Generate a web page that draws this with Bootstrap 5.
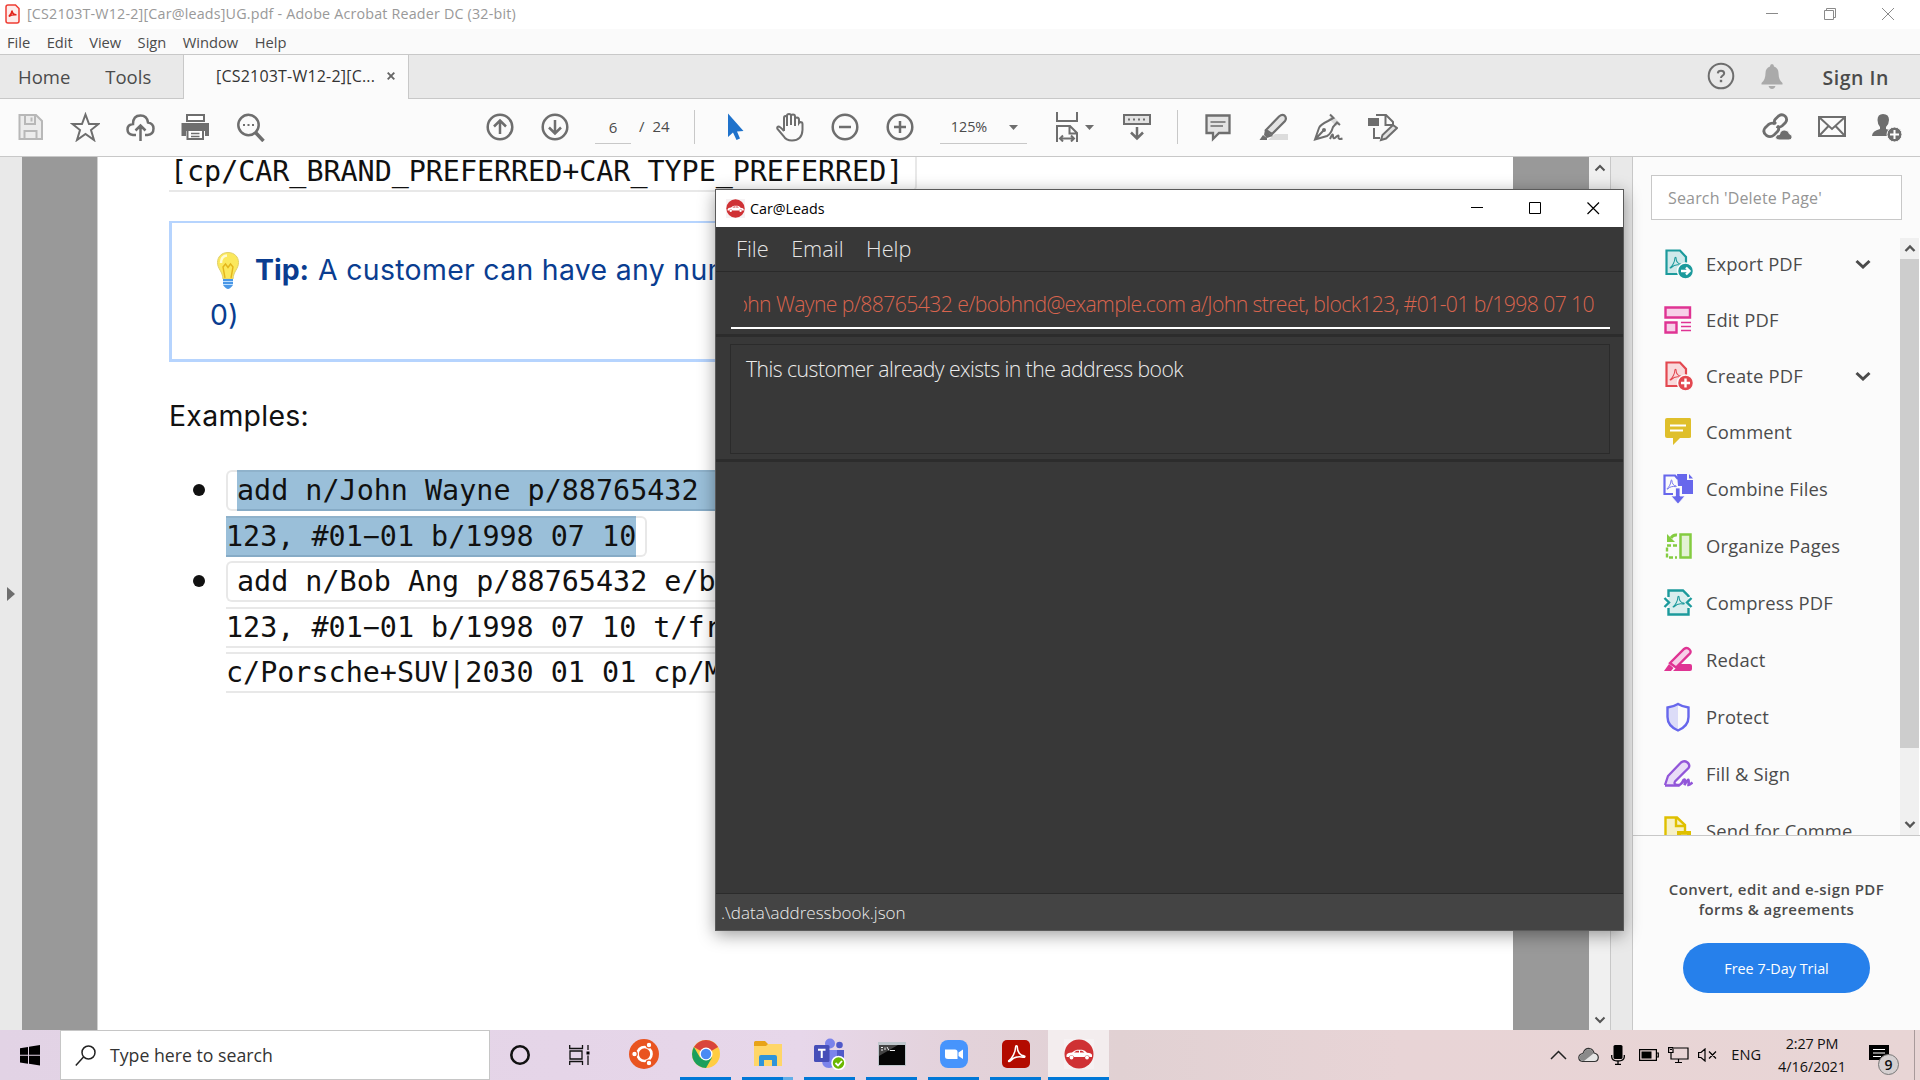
<!DOCTYPE html>
<html lang="en">
<head>
<meta charset="utf-8">
<title>Desktop</title>
<link href="https://cdn.jsdelivr.net/npm/bootstrap@5.3.0/dist/css/bootstrap.min.css" rel="stylesheet">
<style>
body{width:1920px;height:1080px;overflow:hidden;background:#fbfbfb;font-family:"Open Sans","Noto Sans",sans-serif;color:#4b4b4b;white-space:nowrap}
svg{display:block;flex:none}
.ln{fill:none;stroke:#6e6e6e;stroke-width:2}
.w25{stroke-width:2.5}
.gry{fill:#6e6e6e}
.titlebar{height:29px;background:#fff;color:#999;padding-left:5px;padding-right:26px}
.titlebar .cap{font-size:14.3px;line-height:28px;margin-left:7px;letter-spacing:.185px}
.winbtns{gap:46px}
.menubar{height:26px;background:#fafafa;border-bottom:1px solid #c8c8c8;padding-left:7px;font-size:14.7px;line-height:26px;gap:16.4px}
.tabs{height:44px;background:#e9e9e9;border-bottom:1px solid #c8c8c8;line-height:43px}
.navtabs{font-size:18.5px;padding-left:18px;gap:35px;width:183px}
.doctab{width:226px;height:44px;background:#fbfbfb;border:1px solid #c8c8c8;border-width:0 1px;padding-left:32px;color:#333;font-size:16px;letter-spacing:.2px}
.doctab svg{margin:17px 0 0 12px}
.account{padding-right:31px}
.account .q{margin:7px 26px 0 0}
.account .bell{margin:9px 39px 0 0}
.signin{font-size:19.5px;font-weight:600;line-height:46px;letter-spacing:.55px}
.tools{height:58px;border-bottom:1px solid #c8c8c8;font-size:15px;padding-bottom:2px}
.tools svg{width:30px;height:30px}
.tools .grp{gap:25px}
.pg{width:36px;height:34px;border-bottom:1px solid #c8c8c8;line-height:34px;margin-left:25px}
.zm{width:87px;height:34px;border-bottom:1px solid #c8c8c8;line-height:34px;padding-left:11px;padding-right:9px;margin-left:25px;font-size:14.4px}
.tools svg.caret{width:9px}
.vsep{width:1px;height:34px;background:#c8c8c8}
.main{height:873px}
.rail{width:22px;background:#e9e9e9;padding-left:7px}
.gut{background:#999}
.gut.l{width:75px}
.gut.r{width:76px}
.sheet{width:1416px;background:#fff;border-left:1px solid #d0d0d0;padding-left:71px;overflow:hidden}
.mono{font-family:"DejaVu Sans Mono","Liberation Mono",monospace;font-size:28.4px;line-height:37px;color:#111;height:41px;white-space:pre}
.cbox{border:2px solid #e8e8e8}
.first{width:748px;margin-top:-6px;border-left:0;border-radius:0 6px 6px 0;padding-left:1px;letter-spacing:-.04px}
.tip{font-family:Inter,Roboto,sans-serif;margin-top:29px;height:141px;width:1273px;border:3px solid #b6d4fe;border-top-width:2px;padding:24px 0 0 38px;font-size:28.4px;line-height:45px;color:#0a3d90}
.tip svg{display:inline-block;vertical-align:-9px;margin:0 16px 0 7px}
.tip span{letter-spacing:.33px}
.tip b+span{margin-left:1px}
.ex{font-family:Inter,Roboto,sans-serif;font-size:28.4px;line-height:45px;color:#111;margin-top:31px;margin-bottom:32px;letter-spacing:.3px}
.codes{margin-left:57px;gap:4.5px}
.codes .mono{width:1100px}
.codes .st{border-radius:6px 0 0 6px;border-right:0;padding-left:9px}
.codes .mid{border-left:0;border-right:0}
.codes .en{width:421px;border-left:0;border-radius:0 6px 6px 0}
.sel{display:inline-block;background:#9abfd9;height:41px;margin-top:-2px;border-bottom:2px solid #86abc6;border-top:2px solid #8fb2cb}
.dot{width:12px;height:12px;border-radius:50%;background:#111;left:-35px;top:12px}
.sb{width:22px;background:#f0f0f0;border-right:1px solid #c8c8c8;padding:7px 0 6px 5px}
.strip{width:22px;background:#e9e9e9;border-right:1px solid #c8c8c8}
.side{width:287px;background:#fbfbfb}
.find{width:251px;height:45px;border:1px solid #c8c8c8;background:#fff;margin:18px 0 0 18px;padding-left:16px;font-size:16px;line-height:45px;color:#959595;letter-spacing:.17px}
.lst{height:598px;margin-top:18px;border-bottom:1px solid #c8c8c8;overflow:hidden}
.items{margin-top:-2px}
.it{height:57px;padding-left:30px;width:267px;font-size:18.4px;line-height:54px;letter-spacing:.16px}
.it:nth-child(-n+4){height:56px}
.it span{margin-left:13px;color:#4b4b4b}
.it svg{width:30px;height:30px}
.it .chv{width:16px;height:10px;margin-left:auto;margin-right:29px}
.teal{color:#1c9a9c}.coral{color:#e34850}.indigo{color:#6767ec}
.lsb{width:20px;background:#f0f0f0;border-right:1px solid #fff}
.thumb{height:489px;background:#cdcdcd}
.promo{font-size:15px;font-weight:600;line-height:20.4px;margin-top:43px;letter-spacing:.42px}
.trial,.trial:hover{width:187px;height:50px;background:#2680eb;color:#fff;font-size:14.4px;border-radius:25px;line-height:49px;margin-top:23px;padding:0}
.carwin{left:715px;top:189px;width:909px;height:742px;border:1px solid #5a5a5a;background:#383838;box-shadow:0 4px 16px rgba(0,0,0,.38)}
.cbar{height:37px;background:#fff;color:#000;padding-left:10px;padding-right:23px;font-size:14.3px;line-height:38px}
.cbar>svg{margin:9px 5px 0 0}
.cbar .winbtns{margin-top:12px}
.cmenu{height:45px;border-bottom:1px solid #2a2a2a;padding-left:20px;font-size:21.7px;font-weight:300;line-height:44px;color:#e6e6e6;gap:22.5px}
.cmdarea{height:65px;border-bottom:3px solid #2c2c2c;padding:0 13px 0 15px}
.cmdline{height:57px;border-bottom:2px solid #fff;padding:0 16px 0 13px}
.cmdline div{height:55px;line-height:64px;overflow:hidden;font-size:21.2px;font-weight:300;color:#d8644e;letter-spacing:-.61px}
.resarea{height:125px;border-bottom:3px solid #2c2c2c;padding:7px 13px 0 14px}
.resbox{height:110px;border:1px solid #2b2b2b;padding-left:15px;font-size:21.2px;font-weight:300;line-height:48px;color:#ececec;letter-spacing:-.54px}
.cstat{height:37px;border-top:1px solid #2b2b2b;background:#444;padding-left:5px;font-size:17px;font-weight:300;line-height:38px;color:#ececec}
.task{height:50px;background:linear-gradient(90deg,#e2d3e5 0,#e5d5e8 560px,#e7d7ea 800px,#e3d2da 960px,#e1d1d3 1120px,#e8d4d6 1400px,#e8d5d5 1920px);color:#111}
.start{margin:15px 0 0 19px}
.tsearch{width:430px;height:50px;background:#fff;border:1px solid #c6c6c6;margin-left:20px;padding-left:14px;font-size:17.7px;color:#333;line-height:48px}
.tsearch svg{margin:14px 13px 0 0}
.cortana{margin:14px 0 0 19px}
.tview{margin:15px 0 0 38px}
.apps{margin-left:28px}
.app{width:51px;height:50px;margin-right:11px;border-bottom:3px solid #0078d7}
.app.off{border-color:transparent}
.app.part{border-image:linear-gradient(90deg,#0078d7 80%,#62aee8 80%) 1}
.app.act{width:61px;background:#f3edee;margin-left:-4px}
.lang{font-size:14.6px;margin-left:14px}
.clk{width:80px;font-size:14.4px;line-height:23.4px;margin-left:11px}
.clk .hm{letter-spacing:-.2px}
.act-c{margin-left:17px;height:50px;width:45px}
.act-c svg{margin-top:15px}
.nine{left:9px;top:24px;width:21px;height:21px;border-radius:50%;background:#d4cfd0;border:1px solid #777;font-size:14px;font-weight:600;line-height:19px;color:#111}
.peek{width:6px;height:50px;border-left:1px solid #a89a9b}
</style>
<script src="https://cdn.jsdelivr.net/npm/bootstrap@5.3.0/dist/js/bootstrap.bundle.min.js"></script>
</head>
<body>
<svg width="0" height="0" class="position-absolute">
<defs>
<symbol id="tre" viewBox="0 0 20 20"><path d="M2 17.500C5.500 15.500 9 8 9 3.500C9 1.200 11 1.200 10.900 3.500C10.800 8 14 12.500 18 12.500C19.500 12.800 18.800 14.300 17 13.900C12.500 12.800 7 14 3.500 17.800C2.500 18.800 1 18.500 2 17.500Z" fill="none" stroke="currentColor" stroke-width="1.600"/></symbol>
<symbol id="carico" viewBox="0 0 30 30"><rect width="30" height="30" fill="#f6f2f3"/><circle cx="15" cy="15" r="14.500" fill="#cf3134"/><path d="M2.500 16Q3 14 8 13.600Q10.500 11 13 10.700H18Q21 11 23 13.700Q28 14 28 16V18H25.600A2.700 2.700 0 0 0 20.600 18H10A2.700 2.700 0 0 0 5 18H2.500Z" fill="#fff"/><circle cx="7.500" cy="18.500" r="1.900" fill="#fff"/><circle cx="23" cy="18.500" r="1.900" fill="#fff"/><path d="M10 13.600 12.500 11.800H15V13.600ZM16 11.800H18L20.500 13.600H16Z" fill="#cf3134"/></symbol>
</defs>
</svg>

<header>
<div class="titlebar d-flex">
  <svg class="mt-1 coral" width="15" height="20" viewBox="0 0 15 20"><path d="M1 3Q1 1 3 1H10.500L14 4.500V17Q14 19 12 19H3Q1 19 1 17Z" fill="#fdeceb" stroke="#ee3c33" stroke-width="1.500"/><path d="M3.800 12.500Q7 9.500 7 6.500M7 7Q8 11 11.500 10.800M4 12.300Q6.500 10.600 11 10.800" fill="none" stroke="#e2231a" stroke-width="1.500"/></svg>
  <span class="cap">[CS2103T-W12-2][Car@leads]UG.pdf - Adobe Acrobat Reader DC (32-bit)</span>
  <div class="winbtns d-flex ms-auto mt-2">
    <svg width="12" height="12"><path d="M0 5.500H12" stroke="#8a8a8a"/></svg>
    <svg width="12" height="12"><path d="M.5 2.500H9.500V11.500H.5ZM2.500 2.500V.5H11.500V9.500H9.500" fill="none" stroke="#8a8a8a"/></svg>
    <svg width="12" height="12"><path d="M0 0 12 12M12 0 0 12" stroke="#8a8a8a"/></svg>
  </div>
</div>
<nav class="menubar d-flex"><span>File</span><span>Edit</span><span>View</span><span>Sign</span><span>Window</span><span>Help</span></nav>
<div class="tabs d-flex">
  <div class="navtabs d-flex"><span>Home</span><span>Tools</span></div>
  <div class="doctab d-flex"><span>[CS2103T-W12-2][C...</span><svg width="8" height="8"><path d="M.7.7 7.300 7.300M7.300.7.7 7.300" stroke="#666" stroke-width="1.900"/></svg></div>
  <div class="account d-flex ms-auto">
    <svg class="q" width="28" height="28" viewBox="0 0 28 28"><circle cx="14" cy="14" r="12.300" class="ln"/><path d="M10.800 11.300Q11 8.800 14 8.800T17.200 11.300Q17.200 12.800 15.600 13.600Q14 14.500 14 16" class="ln"/><rect x="12.800" y="17.800" width="2.400" height="2.400" class="gry"/></svg>
    <svg class="bell" width="22" height="26" viewBox="0 0 22 26"><path d="M9 2.500Q9 0 11 0T13 2.500Q17.500 4 17.500 9Q17.500 16 21.500 19V20.500H.5V19Q4.500 16 4.500 9Q4.500 4 9 2.500ZM7.500 22H14.500Q13.500 25 11 25T7.500 22Z" fill="#aaa"/></svg>
    <span class="signin">Sign In</span>
  </div>
</div>
<div class="tools d-flex align-items-center">
  <div class="grp d-flex" style="margin-left:15px">
    <svg><path d="M4.500 3H21L27 9V27H4.500Z" fill="#ececec" stroke="#b8b8b8" stroke-width="2"/><path d="M10 3V12H20V3M9.500 27V19H21.500V27M16.500 5.500V9.500" fill="none" stroke="#b8b8b8" stroke-width="2"/></svg>
    <svg><path d="M15.500 2.500 19 12H28.500L21 18 24 28 15.500 22 7 28 10 18 2.500 12H12Z" class="ln"/></svg>
    <svg><path d="M11 23H8Q2.500 22.500 2.500 17.500Q2.500 12.500 8 12Q8 3.500 15.500 3.500Q22 3.500 23 10.500Q28.500 11.500 28.500 16.500Q28.500 22.500 22.500 23H20M15.500 29V14M10.500 18.500 15.500 13.500 20.500 18.500" class="ln w25"/></svg>
    <svg><path d="M7 3H24V9H7Z" fill="#fff" stroke="#6e6e6e" stroke-width="2"/><path d="M1.500 11H29V24H25V19H6V24H1.500Z" class="gry"/><path d="M7.500 18H23V27H7.500Z" fill="#fff" stroke="#6e6e6e" stroke-width="2"/><path d="M11 21.500H19.500M11 24.500H19.500" fill="none" stroke="#6e6e6e" stroke-width="1.300"/></svg>
    <svg><circle cx="13.500" cy="13" r="10.200" class="ln w25"/><path d="M20.500 20.500 28.500 29" fill="none" stroke="#6e6e6e" stroke-width="3.500"/><path d="M8 12h2v2H8zm4.500 0h2v2h-2zm4.500 0h2v2h-2z" class="gry"/></svg>
  </div>
  <div class="grp d-flex" style="margin-left:220px">
    <svg><circle cx="15" cy="15" r="12.300" class="ln w25"/><path d="M15 22V9M9 14.500 15 8.500 21 14.500" class="ln w25"/></svg>
    <svg><circle cx="15" cy="15" r="12.300" class="ln w25"/><path d="M15 8V21M9 15.500 15 21.500 21 15.500" class="ln w25"/></svg>
  </div>
  <div class="pg text-center">6</div>
  <span class="ms-2">/</span><span class="ms-2">24</span>
  <div class="vsep" style="margin-left:24px"></div>
  <div class="grp d-flex" style="margin-left:25px">
    <svg><path d="M8 1.500V25L13 20.500 16.500 28 20 26.500 17 19.500 23.500 19Z" fill="#1f72cb"/></svg>
    <svg><path d="M9 19V6Q9 4 10.500 4T12 6V14M12 13V3.500Q12 2 14 2T16 3.500V13M16 13V4Q16 2.500 18 2.500T20 4.500V14M20 14V7Q20 5.500 22 5.500T24 8V11Q25 9.500 27 10.500Q27.500 11 27.500 12V18Q27 28.500 17 28.500Q11 28.500 8.500 24L2.500 17Q1.500 15 3.500 14.500Q5 14.500 9 19" class="ln"/></svg>
    <svg><circle cx="15" cy="15" r="12.300" class="ln w25"/><path d="M9 15H21" class="ln w25"/></svg>
    <svg><circle cx="15" cy="15" r="12.300" class="ln w25"/><path d="M9 15H21M15 9V21" class="ln w25"/></svg>
  </div>
  <div class="zm d-flex justify-content-between"><span>125%</span><svg class="caret" style="height:34px"><path d="M0 15H9L4.500 20Z" class="gry"/></svg></div>
  <svg style="margin-left:25px"><path d="M5 0V9H25V0M5 30V14H18L25 21V30M17.500 14.500V21.500H24M8 26.500H22M11 23.500 8 26.500 11 29.500M19 23.500 22 26.500 19 29.500" class="ln"/></svg>
  <svg class="caret" style="margin-left:3px"><path d="M0 13H9L4.500 18Z" class="gry"/></svg>
  <svg style="margin-left:28px"><path d="M2 3H28V12H2Z" fill="#e3e3e3" stroke="#6e6e6e" stroke-width="2"/><path d="M6 6.500h2v2H6zm5 0h2v2h-2zm5 0h2v2h-2zm5 0h2v2h-2z" class="gry"/><path d="M15 15V26M9 20.500 15 26.500 21 20.500" class="ln w25"/></svg>
  <div class="vsep" style="margin-left:25px"></div>
  <div class="grp d-flex" style="margin-left:25px">
    <svg><path d="M3.500 3.500H26.500V21H16L10 27V21H3.500Z" fill="#e3e3e3" stroke="#6e6e6e" stroke-width="2.300"/><path d="M7.500 10H22.500M7.500 14H20" stroke="#6e6e6e" stroke-width="1.400"/></svg>
    <svg><path d="M10 28 17 22H30V28Z" fill="#dcdcdc"/><path d="M8 18 21 4.500Q24 2 26.500 3.500Q29 6 27 9L14 22Z" fill="#e3e3e3" stroke="#6e6e6e" stroke-width="2.200"/><path d="M7 17.500 15 24 9 26 6 23ZM1.500 28 5 23 9 26V28Z" class="gry"/></svg>
    <svg><path d="M19 3 27 11 23 14 16 7Z" fill="#dcdcdc"/><path d="M17 2.500 20.500 6 15 9Q7 13 6 16L2 27.500 14 24Q18 22 20 15L24 10.500 27 13M2.500 27 10.500 18.500" class="ln"/><circle cx="11" cy="18" r="2" class="gry"/><path d="M17 27Q20 20 20 24T23 25T25.500 25T29.500 26.500" class="ln"/></svg>
    <svg><path d="M8 3H18L25 10V13H17.500V4M6 16V26H12" class="ln"/><rect y="6" width="11" height="8" class="gry"/><path d="M13 28 14.500 23 25 13 29 16 18 26.500Z" fill="#e3e3e3" stroke="#6e6e6e" stroke-width="2"/></svg>
  </div>
  <div class="grp d-flex ms-auto" style="margin-right:18px">
    <svg><g fill="none" stroke="#6e6e6e" stroke-width="2.800"><path d="M14 12Q11 9.500 13.500 7L16.500 4Q20 1.500 23 4Q26 7 23.500 10.500L20 14Q17.500 16 14.500 14.500"/><path d="M15.500 14Q18 17 15.500 19.500L12 23Q8.500 26 4.500 23.500Q0 20 3 16L6.500 12.500Q10 10 13 12"/></g><path d="M17 28Q12.500 27.500 14 24Q15 22.500 17.500 22.500Q18.500 17.500 23 18Q27 18.500 27.500 22Q31 23 30 26Q29 28 27 28Z" fill="#6e6e6e" stroke="#fbfbfb"/></svg>
    <svg><path d="M2 5H28V24H2ZM2.500 5.500 15 17 27.500 5.500M2.500 23.500 11.500 14M27.500 23.500 18.500 14" class="ln"/></svg>
    <svg><path d="M11 2Q17 2 17 8Q17 12 14 15V17Q21 19 22 22V24H0Q0 19 8 17V15Q5.500 12 5.500 8Q5.500 2 11 2Z" class="gry"/><circle cx="22.500" cy="22.500" r="7.500" fill="#6e6e6e" stroke="#fbfbfb"/><path d="M18 22.500H27M22.500 18V27" stroke="#fff" stroke-width="2"/></svg>
  </div>
</div>
</header>

<main class="main d-flex">
  <div class="rail d-flex align-items-center"><svg width="8" height="14"><path d="M0 0 8 7 0 14Z" fill="#6e6e6e"/></svg></div>
  <div class="gut l"></div>
  <div class="sheet">
    <div class="mono cbox first">[cp/CAR_BRAND_PREFERRED+CAR_TYPE_PREFERRED]</div>
    <div class="tip"><svg width="22" height="37" viewBox="0 0 22 37"><path d="M11 .5C17.500.5 21.500 5 21.500 10.500C21.500 17 16.500 19 16 27H6C5.500 19 .5 17 .5 10.500C.5 5 4.500.5 11 .5Z" fill="#fbe85c" stroke="#e0cf6a"/><path d="M4 11Q4 4 10 3.500" stroke="#fffbd0" stroke-width="2.500" fill="none"/><path d="M8 26 6 15 8.500 12 11 15.500 13.500 12 16 15 14 26" fill="none" stroke="#e3b51c" stroke-width="1.400"/><path d="M6 27H16V33Q13 37 11 37T6 33Z" fill="#4a97e6"/><path d="M6 29.500H16M6 32.500H16" stroke="#bfe0ff" stroke-width="1.200"/></svg><b>Tip:</b> <span>A customer can have any num</span><br><span>0)</span></div>
    <div class="ex">Examples:</div>
    <div class="codes d-flex flex-column">
      <div class="mono cbox st position-relative"><i class="dot position-absolute"></i><span class="sel">add n/John Wayne p/88765432 e</span></div>
      <div class="mono cbox en"><span class="sel">123, #01−01 b/1998 07 10</span></div>
      <div class="mono cbox st position-relative"><i class="dot position-absolute"></i>add n/Bob Ang p/88765432 e/bo</div>
      <div class="mono cbox mid">123, #01−01 b/1998 07 10 t/fri</div>
      <div class="mono cbox mid">c/Porsche+SUV|2030 01 01 cp/Me</div>
    </div>
  </div>
  <div class="gut r"></div>
  <div class="sb d-flex flex-column justify-content-between"><svg width="12" height="8"><path d="M1.500 6.500 6 2 10.500 6.500" fill="none" stroke="#555" stroke-width="2"/></svg><svg width="12" height="8"><path d="M1.500 1.500 6 6 10.500 1.500" fill="none" stroke="#555" stroke-width="2"/></svg></div>
  <div class="strip"></div>
  <aside class="side">
    <div class="find">Search 'Delete Page'</div>
    <div class="lst d-flex">
      <div class="items">
        <div class="it d-flex align-items-center teal"><svg><path d="M3.500 1.500H17L23 8V25H3.500Z" fill="#cfe9ea" stroke="currentColor" stroke-width="2.200"/><use href="#tre" x="6" y="7" width="13" height="13"/><circle cx="22.500" cy="22" r="8" fill="currentColor" stroke="#fbfbfb" stroke-width="1.500"/><path d="M18 22H26M23 18.500 26.500 22 23 25.500" fill="none" stroke="#fff" stroke-width="2.400"/></svg><span>Export PDF</span><svg class="chv"><path d="M1.500 2 8 8 14.500 2" fill="none" stroke="#4b4b4b" stroke-width="3"/></svg></div>
        <div class="it d-flex align-items-center"><svg><path d="M2.500 2.500H27V12.500H2.500ZM2.500 17.500H13.500V27.500H2.500Z" fill="#f7d0e8" stroke="#df3393" stroke-width="2.400"/><path d="M18 17.500H28M18 21.500H28M18 25.500H28" stroke="#df3393" stroke-width="1.500"/></svg><span>Edit PDF</span></div>
        <div class="it d-flex align-items-center coral"><svg><path d="M3.500 1.500H17L23 8V25H3.500Z" fill="#f9dadc" stroke="currentColor" stroke-width="2.200"/><use href="#tre" x="6" y="7" width="13" height="13"/><circle cx="22.500" cy="22" r="8" fill="currentColor" stroke="#fbfbfb" stroke-width="1.500"/><path d="M18 22H27M22.500 17.500V26.500" stroke="#fff" stroke-width="2.400"/></svg><span>Create PDF</span><svg class="chv"><path d="M1.500 2 8 8 14.500 2" fill="none" stroke="#4b4b4b" stroke-width="3"/></svg></div>
        <div class="it d-flex align-items-center"><svg><path d="M4 1H27Q28 1 28 3V20Q28 21 26 21H17L10 28V21H4Q2 21 2 19V3Q2 1 4 1Z" fill="#dfbf2b"/><path d="M7 8.500H23M7 13.500H20" stroke="#fff" stroke-width="2"/></svg><span>Comment</span></div>
        <div class="it d-flex align-items-center indigo"><svg><path d="M10 20H1.500V1.500H12L15 5" fill="none" stroke="currentColor" stroke-width="2.200"/><path d="M14 0H24V6H30V20H19V12H15Z" fill="currentColor"/><path d="M26 0 30 4.500H26Z" fill="currentColor"/><use href="#tre" x="3" y="5" width="11" height="11"/><path d="M12.500 14H17V22H22L15 30 8 22H12.500Z" fill="currentColor" stroke="#fbfbfb" stroke-width=".8"/></svg><span>Combine Files</span></div>
        <div class="it d-flex align-items-center"><svg><path d="M17.500 3.500H27.500V26.500H17.500Z" fill="#e3f2d4" stroke="#84cc40" stroke-width="2.500"/><path d="M14 14.500H4V26.500H14" fill="none" stroke="#84cc40" stroke-width="2.400" stroke-dasharray="4 2"/><path d="M14 4Q10 3.500 8 7" fill="none" stroke="#84cc40" stroke-width="3"/><path d="M4 3V11H12Z" fill="#84cc40"/></svg><span>Organize Pages</span></div>
        <div class="it d-flex align-items-center teal"><svg><path d="M5.500 2.500H20L25.500 8V26.500H5.500Z" fill="#d9eeee"/><path d="M5.500 9V2.500H20L25.500 8V9M5.500 20V26.500H25.500V20M1.500 10 6 14.500 1.500 19M28.500 10 24 14.500 28.500 19" fill="none" stroke="currentColor" stroke-width="2.400"/><use href="#tre" x="9" y="7" width="13" height="13"/></svg><span>Compress PDF</span></div>
        <div class="it d-flex align-items-center"><svg><path d="M10 26 17 19H27Q29 19 29 21V24Q29 26 27 26Z" fill="#df3393"/><path d="M7 18 21 4Q24 2 26.500 4.500T26 9.500L13 22.500Z" fill="#f7d0e8" stroke="#df3393" stroke-width="2.400"/><path d="M1 26 6 19 10.500 23 8 26Z" fill="#df3393"/></svg><span>Redact</span></div>
        <div class="it d-flex align-items-center"><svg><path d="M15 3.500V28Q4.500 24 4.500 15V5.500Z" fill="#dcdcf8"/><path d="M15 2Q20 5 25.500 5.500V15Q25.500 24 15 28.500Q4.500 24 4.500 15V5.500Q10 5 15 2Z" fill="none" stroke="#6767ec" stroke-width="2.400"/></svg><span>Protect</span></div>
        <div class="it d-flex align-items-center"><svg><path d="M2 26 5 17 18 3.500Q21 1 24.500 3.500Q27.500 6 25.500 9L12 22.500Q10 26 16 26" fill="#e9dcf7" stroke="#9256d9" stroke-width="2.300"/><path d="M2 26.500H16Q19 25 20.500 21Q23 19 21.500 26Q25 20 25.500 21T25.500 26Q27 26 29.500 23.500" fill="none" stroke="#9256d9" stroke-width="2.500"/></svg><span>Fill &amp; Sign</span></div>
        <div class="it d-flex align-items-center"><svg><path d="M2.500 1.500H14L22 9V29H2.500Z" fill="#f7f1c6" stroke="#dfc000" stroke-width="2.400"/><path d="M13 2V10H22" fill="none" stroke="#dfc000" stroke-width="2.400"/><rect x="14" y="15" width="14" height="14" fill="#dfc000"/><path d="M18 19.500H24" stroke="#f7f1c6" stroke-width="1.500"/></svg><span>Send for Comme</span></div>
      </div>
      <div class="lsb"><svg width="19" height="21"><path d="M5.500 13 10 8.500 14.500 13" fill="none" stroke="#555" stroke-width="2.400"/></svg><div class="thumb"></div><svg width="19" height="86"><path d="M5.500 74 10 78.500 14.500 74" fill="none" stroke="#555" stroke-width="2.400"/></svg></div>
    </div>
    <div class="promo text-center">Convert, edit and e-sign PDF<br>forms &amp; agreements</div>
    <button class="trial btn d-block mx-auto">Free 7-Day Trial</button>
  </aside>
</main>

<footer class="task d-flex">
  <svg class="start" width="21" height="21" viewBox="0 0 21 21"><path d="M1 3.200 9 2V9.800H1ZM10 1.800 21 0V9.800H10ZM1 10.800H9V18.700L1 17.600ZM10 10.800H21V20.500L10 18.800Z"/></svg>
  <div class="tsearch d-flex"><svg width="22" height="22" viewBox="0 0 22 22"><circle cx="13.500" cy="7.500" r="6.500" fill="none" stroke="#222" stroke-width="1.500"/><path d="M8.500 12 .8 20.500" stroke="#222" stroke-width="1.500"/></svg><span>Type here to search</span></div>
  <svg class="cortana" width="22" height="22"><circle cx="11" cy="11" r="8.700" fill="none" stroke="#111" stroke-width="2.600"/></svg>
  <svg class="tview" width="21" height="20"><path d="M.7 0V3.500H13.500V0M.7 20V16.500H13.500V20M1 6H13V14H1ZM19 0V5M19 10.500V20" fill="none" stroke="#111" stroke-width="1.300"/><rect x="17.500" y="6.500" width="3" height="3"/></svg>
  <div class="apps d-flex">
    <div class="app off d-flex align-items-center justify-content-center"><svg width="30" height="30" viewBox="0 0 30 30"><circle cx="15" cy="15" r="15" fill="#e95420"/><circle cx="15.500" cy="15" r="7" fill="none" stroke="#fff" stroke-width="2.700"/><g fill="#fff" stroke="#e95420" stroke-width="1.200"><circle cx="5.500" cy="15" r="2.800"/><circle cx="20" cy="6" r="2.800"/><circle cx="20" cy="24" r="2.800"/></g></svg></div>
    <div class="app d-flex align-items-center justify-content-center"><svg width="28" height="28" viewBox="0 0 28 28"><circle cx="14" cy="14" r="14" fill="#ffcd42"/><path d="M14 14 1.900 7A14 14 0 0 1 26.100 7Z" fill="#d9453a"/><path d="M1.900 7A14 14 0 0 0 14 28L20 17.500H8Z" fill="#1a9f5c"/><circle cx="14" cy="14" r="6.500" fill="#fff"/><circle cx="14" cy="14" r="5.200" fill="#4a8af4"/></svg></div>
    <div class="app part d-flex align-items-center justify-content-center"><svg width="28" height="26" viewBox="0 0 28 26"><path d="M0 1.500Q0 0 1.500 0H11L14 3H26.500V25H0Z" fill="#e8a317"/><path d="M0 5H12L14 3H28V25H0Z" fill="#ffd668"/><path d="M5 25V16Q5 14 7 14H21Q23 14 23 16V25H18V19H10V25Z" fill="#2f94da"/></svg></div>
    <div class="app d-flex align-items-center justify-content-center"><svg width="32" height="32" viewBox="0 0 32 32"><circle cx="16" cy="5.500" r="5" fill="#7b83eb"/><circle cx="25.500" cy="7" r="3.300" fill="#5059c9"/><path d="M19 12H30V22Q28 28 21 27Z" fill="#5059c9"/><path d="M8 12H23V22Q22 30 15 30T8 22Z" fill="#7b83eb"/><rect y="7" width="15.500" height="17" rx="1.500" fill="#464eb8"/><path d="M4 11.800H11.500M7.750 12V20" stroke="#fff" stroke-width="2"/><circle cx="24.500" cy="25" r="6.500" fill="#6bb700" stroke="#fff" stroke-width="1.600"/><path d="M21.500 25 24 27.500 28 23" fill="none" stroke="#fff" stroke-width="1.800"/></svg></div>
    <div class="app d-flex align-items-center justify-content-center"><svg width="28" height="24" viewBox="0 0 28 24"><rect width="28" height="24" fill="#bfc6cc"/><rect x="1" y="3" width="26" height="20" fill="#050505"/><path d="M1 3H20L1 14Z" fill="#444"/><path d="M3 5.500H5M3 8H5M7 5.500V8M9 5 11 8.500M12 8.500H17" stroke="#eee" stroke-width="1"/></svg></div>
    <div class="app d-flex align-items-center justify-content-center"><svg width="28" height="28" viewBox="0 0 28 28"><rect width="28" height="28" rx="8" fill="#4794fc"/><path d="M5 9.500H15Q17.500 9.500 17.500 12V19H8Q5 19 5 16.500ZM18.500 12.500 23 9.500V19L18.500 16Z" fill="#fff"/></svg></div>
    <div class="app d-flex align-items-center justify-content-center text-white"><svg width="28" height="28" viewBox="0 0 28 28"><rect width="28" height="28" rx="5" fill="#b30b00"/><use href="#tre" x="5" y="4" width="19" height="19"/></svg></div>
    <div class="app act d-flex align-items-center justify-content-center"><svg width="30" height="30"><use href="#carico" width="30" height="30"/></svg></div>
  </div>
  <div class="d-flex align-items-center ms-auto">
    <svg width="17" height="10"><path d="M1 9 8.500 1.500 16 9" fill="none" stroke="#222" stroke-width="1.500"/></svg>
    <svg width="21" height="16" viewBox="0 0 21 16" style="margin-left:11px"><path d="M4.500 14.500Q.8 14 .8 10.500Q1 7 5 6.500Q7 1 11.500 1.500Q15 2 16 6Q20.300 7 20.300 10.500Q20 14.500 16.500 14.500Z" fill="#e6e6e6" stroke="#333" stroke-width="1.200"/><path d="M1.500 11Q1.500 7.500 5 7Q7 2 11.500 2Q15 3 15.500 6.500L6 14Q1.500 14 1.500 11Z" fill="#8a8a8a"/></svg>
    <svg width="14" height="20" viewBox="0 0 14 20" style="margin-left:12px"><rect x="2.500" width="9" height="14" rx="1.500"/><path d="M.7 10V12Q1 16 7 16T13.300 12V10M7 16V19M4 19.300H10" fill="none" stroke="#000" stroke-width="1.300"/></svg>
    <svg width="20" height="12" style="margin-left:14px"><path d="M.6.6H17.400V11.400H.6ZM17.400 4H19.300V8H17.400" fill="none" stroke="#000" stroke-width="1.200"/><rect x="2.500" y="2.500" width="10" height="7"/></svg>
    <svg width="21" height="17" style="margin-left:9px"><path d="M6 1H20V12H3V6M7 15.500H14M10.500 12V15.500M.6.6H5V5.500H.6ZM2 2.500H4" fill="none" stroke="#000" stroke-width="1.200"/></svg>
    <svg width="19" height="14" style="margin-left:9px"><path d="M.6 4.500H3L7 1V13L3 9.500H.6ZM11 3.500 18 10.500M18 3.500 11 10.500" fill="none" stroke="#000" stroke-width="1.200"/></svg>
    <span class="lang">ENG</span>
    <div class="clk text-center"><span class="hm">2:27 PM</span><br>4/16/2021</div>
    <div class="act-c position-relative"><svg width="20" height="20"><path d="M0 0H20V15H14L10 20V15H0Z"/><path d="M4 4.500H16M4 8H16M4 11.500H12" stroke="#fff" stroke-width="1.200"/></svg><span class="nine position-absolute text-center">9</span></div>
    <div class="peek"></div>
  </div>
</footer>

<section class="carwin position-absolute d-flex flex-column">
  <div class="cbar d-flex"><svg width="19" height="19"><use href="#carico" width="19" height="19"/></svg><span>Car@Leads</span>
    <div class="winbtns d-flex ms-auto"><svg width="12" height="13"><path d="M0 5.500H12" stroke="#000"/></svg><svg width="12" height="13"><path d="M.5.5H11.500V11.500H.5Z" fill="none" stroke="#000"/></svg><svg width="13" height="13"><path d="M.5.5 12 12M12 .5 .5 12" stroke="#000" stroke-width="1.200"/></svg></div></div>
  <div class="cmenu d-flex"><span>File</span><span>Email</span><span>Help</span></div>
  <div class="cmdarea"><div class="cmdline"><div class="d-flex justify-content-end"><span>ohn Wayne p/88765432 e/bobhnd@example.com a/John street, block123, #01-01 b/1998 07 10</span></div></div></div>
  <div class="resarea"><div class="resbox">This customer already exists in the address book</div></div>
  <div class="cstat mt-auto">.\data\addressbook.json</div>
</section>
</body>
</html>
